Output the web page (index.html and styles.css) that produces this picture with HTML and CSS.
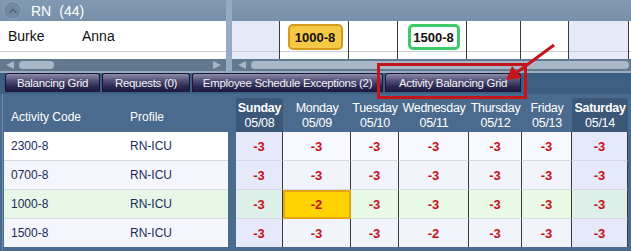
FILE: index.html
```html
<!DOCTYPE html>
<html lang="en">
<head>
  <meta charset="UTF-8" />
  <title>Activity Balancing Grid</title>
  <link rel="stylesheet" href="styles.css">
</head>
<body>
  <div class="schedule">
    <div class="pane pane-left">
      <div class="pane-head">
        <span class="collapse"><svg width="10" height="8" viewBox="0 0 10 8"><path d="M1.5 6 L5 2.5 L8.5 6" fill="none" stroke="#4f6480" stroke-width="1.6"/></svg></span>
        <span class="group">RN</span><span class="group-count">(44)</span>
      </div>
      <div class="pane-body">
        <div class="emp-row">
          <span class="last">Burke</span><span class="first">Anna</span>
        </div>
      </div>
      <div class="hscroll">
        <span class="arr arr-left"></span><span class="thumb thumb-left"></span><span class="arr arr-right"></span>
      </div>
    </div>
    <div class="splitter"></div>
    <div class="pane pane-right">
      <div class="pane-head"></div>
      <div class="pane-body days">
        <div class="day weekend"></div>
        <div class="day mon"><span class="badge badge-yellow">1000-8</span></div>
        <div class="day tue"></div>
        <div class="day wed"><span class="badge badge-green">1500-8</span></div>
        <div class="day thu"></div>
        <div class="day fri"></div>
        <div class="day weekend sat"></div>
      </div>
      <div class="hscroll">
        <span class="arr arr-left"></span><span class="thumb thumb-right"></span>
      </div>
    </div>
  </div>
  <div class="strip"></div>

  <div class="tabs">
    <div class="tab t1">Balancing Grid</div>
    <div class="tab t2">Requests (0)</div>
    <div class="tab t3">Employee Schedule Exceptions (2)</div>
    <div class="tab t4">Activity Balancing Grid</div>
  </div>

  <div class="grid-wrap">
    <div class="bgrid">
      <div class="hd hd-left">Activity Code</div>
      <div class="hd hd-left">Profile</div>
      <div class="gap"></div>
      <div class="hd hd-day hd-weekend"><b>Sunday</b>05/08</div>
      <div class="hd hd-day"><span>Monday</span>05/09</div>
      <div class="hd hd-day"><span>Tuesday</span>05/10</div>
      <div class="hd hd-day"><span>Wednesday</span>05/11</div>
      <div class="hd hd-day"><span>Thursday</span>05/12</div>
      <div class="hd hd-day"><span>Friday</span>05/13</div>
      <div class="hd hd-day hd-weekend"><b>Saturday</b>05/14</div>

      <div class="c txt r1">2300-8</div>
      <div class="c txt r1">RN-ICU</div>
      <div class="gap"></div>
      <div class="c v we r1">-3</div>
      <div class="c v wd r1">-3</div>
      <div class="c v wd r1">-3</div>
      <div class="c v wd r1">-3</div>
      <div class="c v wd r1">-3</div>
      <div class="c v wd r1">-3</div>
      <div class="c v we r1">-3</div>

      <div class="c txt r2">0700-8</div>
      <div class="c txt r2">RN-ICU</div>
      <div class="gap"></div>
      <div class="c v we r2">-3</div>
      <div class="c v wd r2">-3</div>
      <div class="c v wd r2">-3</div>
      <div class="c v wd r2">-3</div>
      <div class="c v wd r2">-3</div>
      <div class="c v wd r2">-3</div>
      <div class="c v we r2">-3</div>

      <div class="c txt r3">1000-8</div>
      <div class="c txt r3">RN-ICU</div>
      <div class="gap"></div>
      <div class="c v we r3">-3</div>
      <div class="c v wd r3 hot">-2</div>
      <div class="c v wd r3">-3</div>
      <div class="c v wd r3">-3</div>
      <div class="c v wd r3">-3</div>
      <div class="c v wd r3">-3</div>
      <div class="c v we r3">-3</div>

      <div class="c txt r4">1500-8</div>
      <div class="c txt r4">RN-ICU</div>
      <div class="gap"></div>
      <div class="c v we r4">-3</div>
      <div class="c v wd r4">-3</div>
      <div class="c v wd r4">-3</div>
      <div class="c v wd r4">-2</div>
      <div class="c v wd r4">-3</div>
      <div class="c v wd r4">-3</div>
      <div class="c v we r4">-3</div>
    </div>
  </div>

  <!-- callout over the selected tab -->
  <div class="callout-box"></div>
  <svg class="callout-arrow" width="631" height="251" viewBox="0 0 631 251">
    <line x1="554" y1="45" x2="516" y2="73" stroke="#c4141c" stroke-width="3"/>
    <polygon points="506,80 512,66 522,78" fill="#c4141c"/>
  </svg>
</body>
</html>
```

FILE: styles.css
```css
* {
  margin: 0;
  padding: 0;
  box-sizing: border-box;
}
body {
  width: 631px;
  height: 251px;
  overflow: hidden;
  position: relative;
  background: #4b6b8e;
  font-family: "Liberation Sans", Arial, sans-serif;
}

/* schedule panes */
.schedule {
  display: flex;
  height: 71px;
  background: #7d95af;
}
.pane-left {
  width: 226px;
}
.pane-right {
  flex: 1;
}
.splitter {
  width: 6px;
  background: #95abc3;
}
.pane-head {
  height: 21px;
  display: flex;
  align-items: center;
  background: linear-gradient(#8299b3, #7890aa);
  color: #fff;
  font-size: 14px;
}
.collapse {
  width: 19px;
  height: 19px;
  margin: 0 9px 0 3px;
  border-radius: 50%;
  border: 1px solid #8ea6c0;
  background: #7088a2;
  display: flex;
  align-items: center;
  justify-content: center;
}
.group-count {
  margin-left: 8px;
}
.pane-body {
  height: 38px;
  background: #fff;
}
.emp-row {
  height: 31px;
  display: flex;
  align-items: center;
  border-bottom: 1px solid #c9ccd2;
  font-size: 14px;
  color: #111;
}
.last {
  width: 82px;
  padding-left: 8px;
}
.days {
  display: flex;
  background: linear-gradient(#fff 30px, #c9ccd2 30px, #c9ccd2 31px, #fff 31px);
}
.day {
  width: 69px;
  border-right: 1px solid #3a3a3a;
  display: flex;
  justify-content: center;
  padding-top: 3px;
}
.day.weekend {
  width: 48px;
  background: linear-gradient(#e6e9f8 30px, #c9ccd2 30px, #c9ccd2 31px, #e6e9f8 31px);
}
.day.sat {
  width: 60px;
}
.day.tue {
  width: 49px;
}
.day.thu {
  width: 54px;
}
.day.fri {
  width: 48px;
}
.badge {
  height: 26px;
  border-radius: 5px;
  border: 2px solid;
  font-size: 13px;
  font-weight: bold;
  color: #111;
  display: flex;
  align-items: center;
  justify-content: center;
}
.badge-yellow {
  width: 55px;
  margin-left: 2px;
  background: #f6c944;
  border-color: #d49b1c;
}
.badge-green {
  width: 52px;
  margin-left: 3px;
  background: #fff;
  border-color: #3ccb68;
  border-width: 3px;
}
.hscroll {
  height: 12px;
  background: #63798f;
  display: flex;
  align-items: center;
  position: relative;
}
.arr {
  width: 0;
  height: 0;
  border-top: 4px solid transparent;
  border-bottom: 4px solid transparent;
}
.arr-left {
  margin-left: 6px;
  border-right: 8px solid #a7b5c4;
}
.arr-right {
  margin-left: auto;
  margin-right: 5px;
  border-left: 8px solid #a7b5c4;
}
.thumb {
  height: 8px;
  border-radius: 4px;
  background: #a9b8c8;
  margin-left: 5px;
}
.thumb-left {
  width: 35px;
}
.thumb-right {
  flex: 1;
  margin-right: 2px;
}
.strip {
  height: 2px;
  background: #9aabbd;
}

/* tabs */
.tabs {
  height: 21px;
  display: flex;
  gap: 2px;
  padding: 0 0 0 5px;
  background: #3f5f82;
}
.tab {
  height: 19px;
  border: 1px solid #17163a;
  border-bottom: none;
  border-radius: 3px 3px 0 0;
  background: linear-gradient(#8d8ba8 0%, #55537a 35%, #2a2850 70%, #1c1a3e 100%);
  color: #f2f2f6;
  font-size: 11.5px;
  letter-spacing: -0.3px;
  white-space: nowrap;
  display: flex;
  align-items: center;
  justify-content: center;
}
.t1 { width: 95px; }
.t2 { width: 88px; }
.t3 { width: 191px; }
.t4 { width: 136px; }

/* balancing grid */
.grid-wrap {
  height: 157px;
  padding: 4px 3px 0 4px;
  border-left: 1px solid #6f8cab;
  margin-left: 2px;
  background: #4b6b8e;
}
.bgrid {
  margin-left: -3px;
  display: grid;
  grid-template-columns: 117px 107px 8px 47px 68px 48px 70px 53px 50px 56px;
  grid-template-rows: 34px 29px 29px 29px 28px;
}
.hd {
  color: #fff;
  font-size: 12px;
  display: flex;
  align-items: center;
}
.hd-left {
  padding-left: 7px;
  padding-top: 3px;
}
.hd-left + .hd-left {
  padding-left: 9px;
}
.hd-day {
  flex-direction: column;
  justify-content: center;
  line-height: 15px;
  padding-top: 2px;
  font-size: 12.5px;
  letter-spacing: -0.3px;
}
.hd-weekend {
  background: #3b5878;
  border-radius: 3px 3px 0 0;
}
.c {
  display: flex;
  align-items: center;
  border-bottom: 1px solid #d5d9e4;
}
.txt {
  padding-left: 7px;
  color: #1b2a5a;
  font-size: 12px;
}
.txt + .txt {
  padding-left: 9px;
}
.v {
  justify-content: center;
  color: #c8101a;
  font-weight: bold;
  font-size: 13px;
  border-right: 1px solid #3a3a3a;
}
.r1.txt { background: #fff; }
.r2.txt, .r4.txt { background: #f4f6fb; }
.r3.txt { background: #e7f7e7; }
.wd.r1 { background: #f8f9fe; }
.wd.r2, .wd.r4 { background: #f2f4fc; }
.wd.r3 { background: #e8f9e6; }
.we { background: #e6e9f9; }
.we.r3 { background: #dcefe8; }
.r4 { border-bottom: none; }
.v.hot {
  background: #ffd200;
  outline: 2px solid #e5a417;
  outline-offset: -2px;
}

/* red callout */
.callout-box {
  position: absolute;
  left: 377px;
  top: 63px;
  width: 150px;
  height: 36px;
  border: 3px solid #c4141c;
}
.callout-arrow {
  position: absolute;
  left: 0;
  top: 0;
  pointer-events: none;
}
```
